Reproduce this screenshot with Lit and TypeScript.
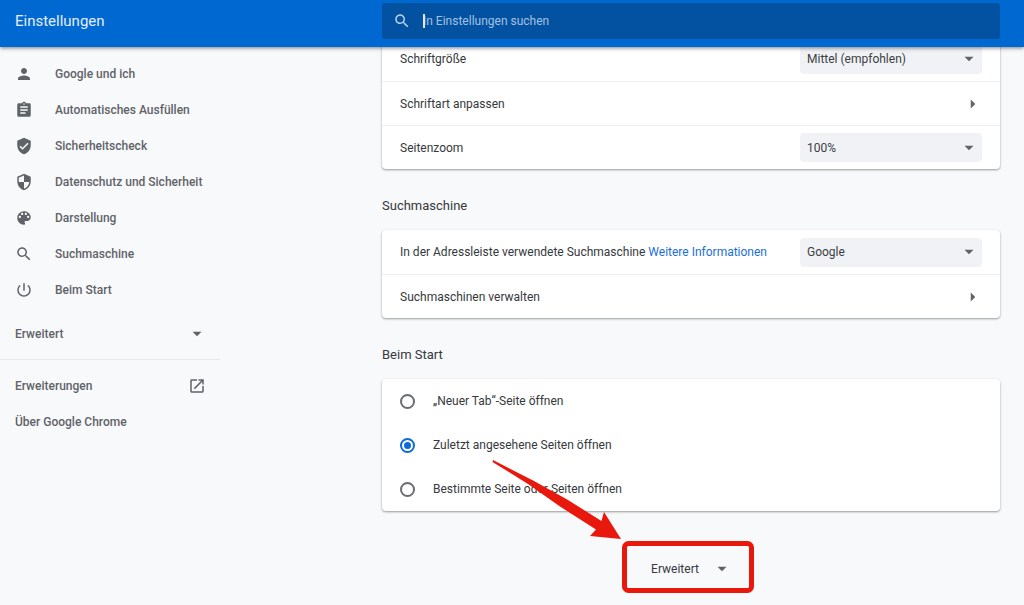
import { LitElement, html, css, svg } from "lit";
import { customElement, property, state } from "lit/decorators.js";

const ICONS: Record<string, string> = {
  person: "M12 12c2.21 0 4-1.79 4-4s-1.79-4-4-4-4 1.79-4 4 1.79 4 4 4zm0 2c-2.67 0-8 1.34-8 4v2h16v-2c0-2.66-5.33-4-8-4z",
  assignment: "M19 3h-4.18C14.4 1.84 13.3 1 12 1c-1.3 0-2.4.84-2.82 2H5c-1.1 0-2 .9-2 2v14c0 1.1.9 2 2 2h14c1.1 0 2-.9 2-2V5c0-1.1-.9-2-2-2zm-7 0c.55 0 1 .45 1 1s-.45 1-1 1-1-.45-1-1 .45-1 1-1zm2 14H7v-2h7v2zm3-4H7v-2h10v2zm0-4H7V7h10v2z",
  check: "M12 1L3 5v6c0 5.55 3.84 10.74 9 12 5.16-1.26 9-6.45 9-12V5l-9-4zm-2 16l-4-4 1.41-1.41L10 14.17l6.59-6.59L18 9l-8 8z",
  security: "M12 1L3 5v6c0 5.55 3.84 10.74 9 12 5.16-1.26 9-6.45 9-12V5l-9-4zm0 10.99h7c-.53 4.12-3.28 7.79-7 8.94V12H5V6.3l7-3.11v8.8z",
  palette: "M12 3c-4.97 0-9 4.03-9 9s4.03 9 9 9c.83 0 1.5-.67 1.5-1.5 0-.39-.15-.74-.39-1.01-.23-.26-.38-.61-.38-.99 0-.83.67-1.5 1.5-1.5H16c2.76 0 5-2.24 5-5 0-4.42-4.03-8-9-8zm-5.500 9c-.83 0-1.5-.67-1.5-1.5S5.670 9 6.500 9 8 9.670 8 10.500 7.330 12 6.500 12zm3-4C8.670 8 8 7.330 8 6.500S8.670 5 9.500 5s1.500.67 1.500 1.500S10.330 8 9.500 8zm5 0c-.83 0-1.5-.67-1.5-1.5S13.670 5 14.500 5s1.500.67 1.500 1.500S15.330 8 14.500 8zm3 4c-.83 0-1.5-.67-1.5-1.5S16.670 9 17.500 9s1.500.67 1.500 1.500-.67 1.500-1.500 1.500z",
  search: "M15.5 14h-.79l-.28-.27C15.41 12.59 16 11.11 16 9.5 16 5.91 13.09 3 9.5 3S3 5.91 3 9.5 5.91 16 9.5 16c1.61 0 3.09-.59 4.23-1.57l.27.28v.79l5 4.99L20.49 19l-4.99-5zm-6 0C7.01 14 5 11.99 5 9.5S7.01 5 9.5 5 14 7.01 14 9.5 11.99 14 9.5 14z",
  power: "M13 3h-2v10h2V3zm4.83 2.17l-1.42 1.42C17.99 7.86 19 9.81 19 12c0 3.87-3.13 7-7 7s-7-3.13-7-7c0-2.19 1.01-4.14 2.58-5.42L6.17 5.17C4.23 6.82 3 9.26 3 12c0 4.97 4.03 9 9 9s9-4.03 9-9c0-2.740-1.230-5.180-3.170-6.830z",
  open: "M19 19H5V5h7V3H5c-1.110 0-2 .9-2 2v14c0 1.100.890 2 2 2h14c1.100 0 2-.9 2-2v-7h-2v7zM14 3v2h3.590l-9.830 9.830 1.410 1.410L19 6.410V10h2V3h-7z",
  down: "M6 9l6 6 6-6z",
  right: "M9 6l6 6-6 6z",
};

const icon = (name: string, cls = "icon") => html`
  <svg class=${cls} viewBox="0 0 24 24" aria-hidden="true">${svg`<path d=${ICONS[name]}></path>`}</svg>
`;

const NAV = [
  { icon: "person", label: "Google und ich" },
  { icon: "assignment", label: "Automatisches Ausfüllen" },
  { icon: "check", label: "Sicherheitscheck" },
  { icon: "security", label: "Datenschutz und Sicherheit" },
  { icon: "palette", label: "Darstellung" },
  { icon: "search", label: "Suchmaschine" },
  { icon: "power", label: "Beim Start" },
];

const STARTUP = [
  "„Neuer Tab“-Seite öffnen",
  "Zuletzt angesehene Seiten öffnen",
  "Bestimmte Seite oder Seiten öffnen",
];

@customElement("settings-toolbar")
export class SettingsToolbar extends LitElement {
  static styles = css`
    :host {
      display: grid;
      grid-template-columns: 382px minmax(0, 1fr);
      align-items: start;
      box-sizing: border-box;
      height: 47px;
      padding: 3px 24px 0 0;
      background: #0068d1;
      box-shadow: 0 1px 4px rgba(0, 0, 0, 0.5);
      color: #e3eefb;
    }
    .title {
      margin: 0;
      padding-left: 15px;
      font-size: 15px;
      font-weight: 400;
      line-height: 36px;
    }
    .search {
      position: relative;
      display: flex;
      align-items: center;
      max-width: 680px;
      height: 36px;
      border-radius: 3px;
      background: #0352a1;
    }
    .icon {
      flex: none;
      width: 18px;
      height: 18px;
      margin: 0 12px 0 11px;
      fill: #b8d0ea;
    }
    .input {
      flex: 1;
      min-width: 0;
      height: 36px;
      padding: 0;
      border: 0;
      outline: 0;
      background: none;
      color: #fff;
      font: inherit;
    }
    .input::placeholder {
      color: #a3c1e2;
      opacity: 1;
    }
    .caret {
      position: absolute;
      left: 41px;
      top: 11px;
      width: 2px;
      height: 14px;
      background: #dce8f5;
    }
  `;

  render() {
    return html`
      <h1 class="title">Einstellungen</h1>
      <div class="search">
        ${icon("search")}
        <input class="input" type="text" placeholder="In Einstellungen suchen" aria-label="In Einstellungen suchen" />
        <span class="caret"></span>
      </div>
    `;
  }
}

@customElement("settings-menu")
export class SettingsMenu extends LitElement {
  static styles = css`
    :host {
      display: block;
      padding-top: 9px;
      color: #5f6368;
      font-weight: 500;
    }
    .item {
      display: flex;
      align-items: center;
      width: 100%;
      height: 36px;
      box-sizing: border-box;
      padding: 0 14px 0 15px;
      border: 0;
      background: none;
      color: inherit;
      font: inherit;
      text-align: left;
      text-decoration: none;
    }
    .icon {
      width: 18px;
      height: 18px;
      fill: currentColor;
    }
    .icon:first-child {
      margin-right: 22px;
    }
    .spread {
      justify-content: space-between;
    }
    .advanced {
      margin: 8px 0 7px;
    }
    .footer {
      padding-top: 8px;
      border-top: 1px solid #e6e8ea;
    }
  `;

  render() {
    return html`
      <nav>
        ${NAV.map((n) => html`<a class="item" href="#">${icon(n.icon)}<span>${n.label}</span></a>`)}
        <button class="item spread advanced" type="button"><span>Erweitert</span>${icon("down")}</button>
        <div class="footer">
          <a class="item spread" href="#"><span>Erweiterungen</span>${icon("open")}</a>
          <a class="item" href="#">Über Google Chrome</a>
        </div>
      </nav>
    `;
  }
}

@customElement("settings-select")
export class SettingsSelect extends LitElement {
  @property() label = "";
  @property() value = "";

  static styles = css`
    :host {
      display: grid;
      align-items: center;
      width: 182px;
    }
    .select {
      grid-area: 1 / 1;
      height: 29px;
      padding: 0 28px 0 7px;
      border: 0;
      border-radius: 4px;
      appearance: none;
      background: #f0f2f5;
      color: #3c4043;
      font: inherit;
    }
    .icon {
      grid-area: 1 / 1;
      justify-self: end;
      width: 18px;
      height: 18px;
      margin-right: 4px;
      fill: #5f6368;
      pointer-events: none;
    }
  `;

  render() {
    return html`
      <select class="select" aria-label=${this.label}><option>${this.value}</option></select>
      ${icon("down")}
    `;
  }
}

@customElement("app-root")
export class AppRoot extends LitElement {
  @state() private startup = 1;

  static styles = css`
    :host {
      display: block;
      min-height: 100vh;
      background: #f8f9fb;
      color: #35383c;
      font: 400 12px/18px Roboto, sans-serif;
    }
    .toolbar {
      position: sticky;
      top: 0;
      z-index: 1;
    }
    .body {
      display: grid;
      grid-template-columns: 220px minmax(0, 1fr);
      column-gap: 162px;
      padding-right: 24px;
    }
    .main {
      max-width: 680px;
      margin-top: -10px;
    }
    .card {
      border-radius: 4px;
      background: #fff;
      box-shadow: 0 1px 2px rgba(60, 64, 67, 0.4), 0 1px 3px rgba(60, 64, 67, 0.15);
    }
    .row {
      display: flex;
      align-items: center;
      justify-content: space-between;
      width: 100%;
      height: 44px;
      box-sizing: border-box;
      padding: 0 18px;
      border: 0;
      background: none;
      color: inherit;
      font: inherit;
      text-align: left;
    }
    .row + .row {
      border-top: 1px solid #eeeff0;
    }
    .chevron {
      width: 18px;
      height: 18px;
      fill: #5f6368;
    }
    .heading {
      margin: 0;
      padding: 28px 0 15px;
      font-size: 13px;
      font-weight: 400;
      line-height: 18px;
    }
    .link {
      color: #1a6fd8;
      text-decoration: none;
    }
    .option {
      display: flex;
      align-items: center;
      gap: 18px;
      height: 44px;
      padding: 0 18px;
    }
    .radio {
      display: grid;
      place-content: center;
      width: 15px;
      height: 15px;
      box-sizing: border-box;
      margin: 0;
      border: 2px solid #6a6d72;
      border-radius: 50%;
      appearance: none;
    }
    .radio:checked {
      border-color: #0b6bd8;
    }
    .radio:checked::before {
      width: 7px;
      height: 7px;
      border-radius: 50%;
      background: #0b6bd8;
      content: "";
    }
    .more {
      display: flex;
      justify-content: center;
      padding-top: 40px;
    }
    .more-box {
      position: relative;
    }
    .more-button {
      display: flex;
      align-items: center;
      gap: 14px;
      height: 36px;
      padding: 0;
      border: 0;
      background: none;
      color: inherit;
      font: inherit;
    }
    .mark {
      position: absolute;
      right: -25px;
      bottom: -9px;
      width: 268px;
      height: 140px;
      pointer-events: none;
    }
  `;

  render() {
    return html`
      <settings-toolbar class="toolbar"></settings-toolbar>
      <div class="body">
        <settings-menu></settings-menu>
        <main class="main">
          <section class="card">
            <div class="row">
              <span>Schriftgröße</span>
              <settings-select label="Schriftgröße" value="Mittel (empfohlen)"></settings-select>
            </div>
            <button class="row" type="button"><span>Schriftart anpassen</span>${icon("right", "chevron")}</button>
            <div class="row">
              <span>Seitenzoom</span>
              <settings-select label="Seitenzoom" value="100%"></settings-select>
            </div>
          </section>

          <h2 class="heading">Suchmaschine</h2>
          <section class="card">
            <div class="row">
              <span>In der Adressleiste verwendete Suchmaschine <a class="link" href="#">Weitere Informationen</a></span>
              <settings-select label="Suchmaschine" value="Google"></settings-select>
            </div>
            <button class="row" type="button"><span>Suchmaschinen verwalten</span>${icon("right", "chevron")}</button>
          </section>

          <h2 class="heading">Beim Start</h2>
          <section class="card">
            ${STARTUP.map(
              (text, i) => html`
                <label class="option">
                  <input
                    class="radio"
                    type="radio"
                    name="startup"
                    .checked=${this.startup === i}
                    @change=${() => (this.startup = i)}
                  />
                  <span>${text}</span>
                </label>
              `
            )}
          </section>

          <div class="more">
            <div class="more-box">
              <button class="more-button" type="button"><span>Erweitert</span>${icon("down", "chevron")}</button>
              <svg class="mark" viewBox="0 0 268 140" aria-hidden="true">
                <rect x="136.500" y="87.500" width="127" height="47" rx="4" fill="none" stroke="#e8190c" stroke-width="5"></rect>
                <path d="M5 4 L46 25 L80 44 L113.500 65 L116 56 L133 83 L102 80 L108 73.500 L72 50.500 L40 28 L4.500 6 Z" fill="#e8190c"></path>
              </svg>
            </div>
          </div>
        </main>
      </div>
    `;
  }
}
